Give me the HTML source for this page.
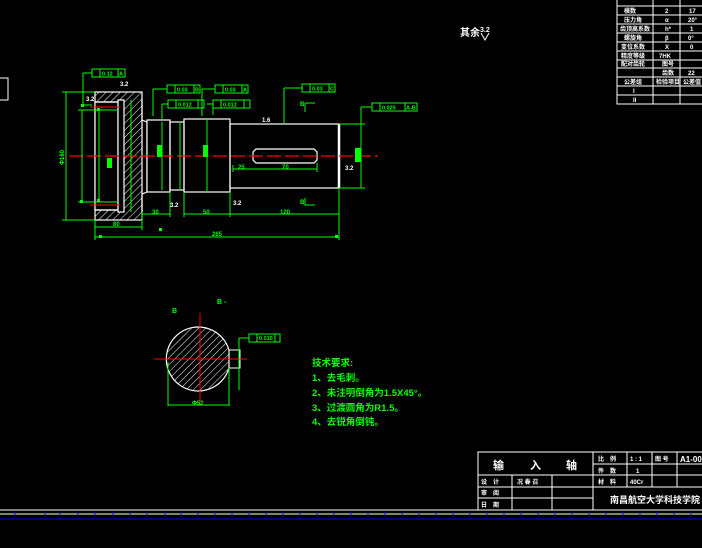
<!DOCTYPE html>
<html><head><meta charset="utf-8"><style>
html,body{margin:0;padding:0;background:#000;width:702px;height:548px;overflow:hidden}
svg{display:block}
text{font-family:"Liberation Sans","Noto Sans CJK SC",sans-serif;font-weight:bold}
</style></head><body>
<svg width="702" height="548" viewBox="0 0 702 548" xmlns="http://www.w3.org/2000/svg">
<defs>
<pattern id="h" width="5" height="5" patternUnits="userSpaceOnUse" patternTransform="rotate(45)">
<line x1="0" y1="0" x2="0" y2="5" stroke="#fff" stroke-width="1"/></pattern>
</defs>
<rect width="702" height="548" fill="#000"/>
<rect x="-1" y="78" width="9" height="22" fill="none" stroke="#fff"/>
<text x="460" y="36" fill="#fff" font-size="10">其余</text>
<text x="480" y="32" fill="#fff" font-size="7">3.2</text>
<path d="M481 33 L485 40 L489 33" stroke="#fff" fill="none"/>

<g stroke="#fff" fill="none" stroke-width="1.2">
<rect x="95" y="92" width="47" height="128" fill="url(#h)"/>
<rect x="95" y="102" width="23" height="108" fill="#000"/>
<rect x="118" y="100" width="6" height="112" fill="#000"/>
<line x1="95" y1="102" x2="118" y2="102"/><line x1="95" y1="210" x2="118" y2="210"/>
<path d="M142 100 L142 120 L147 122 L147 192 L142 194 L142 212"/>
<rect x="147" y="120" width="23" height="72" fill="#000"/>
<rect x="170" y="122" width="14" height="68"/>
<rect x="184" y="119" width="46" height="73"/>
<rect x="230" y="124" width="109" height="64"/>
<line x1="339" y1="124" x2="339" y2="188" stroke-width="2.5"/>
<path d="M256 149 L314 149 L317 152 L317 160 L314 163 L256 163 L253 160 L253 152 Z"/>
</g>
<line x1="69" y1="156" x2="378" y2="156" stroke="#f00" stroke-width="1.2" stroke-dasharray="14,4"/>
<line x1="90" y1="107" x2="120" y2="107" stroke="#f00"/>
<line x1="90" y1="205" x2="120" y2="205" stroke="#f00"/>

<g stroke="#0f0" fill="none" stroke-width="1">
<path d="M66 92 L66 220 M62 92 L95 92 M62 220 L95 220"/>
<path d="M82 110 L82 202 M78 110 L118 110 M78 202 L118 202"/>
<path d="M99 110 L99 202"/>
<path d="M131 100 L131 212"/>
<path d="M95 220 L95 240 M339 188 L339 240 M95 237 L339 237"/>
<path d="M95 227 L142 227 M142 212 L142 230"/>
<path d="M142 214 L170 214 M170 192 L170 217 M184 214 L230 214 M184 192 L184 217 M230 214 L339 214 M230 192 L230 217"/>
<path d="M233 169 L317 169 M233 165 L233 172 M317 163 L317 172"/>
<path d="M162 122 L162 190 M180 122 L180 190 M207 119 L207 192"/>
<path d="M361 124 L361 188 M339 124 L365 124 M339 188 L365 188"/>
<path d="M83 73 L83 105 L92 105 M83 73 L92 73"/>
<rect x="92" y="69" width="33" height="8"/><path d="M100 69 V77 M118 69 V77"/>
<path d="M153 89 L153 116 M153 89 L167 89"/>
<rect x="167" y="85" width="33" height="8"/><path d="M175 85 V93 M194 85 V93"/>
<path d="M162 104 L162 120 M162 104 L168 104"/>
<rect x="168" y="100" width="36" height="8"/><path d="M176 100 V108 M198 100 V108"/>
<path d="M202 89 L202 116 M202 89 L215 89"/>
<rect x="215" y="85" width="33" height="8"/><path d="M223 85 V93 M242 85 V93"/>
<path d="M207 104 L213 104 L213 115"/>
<rect x="213" y="100" width="37" height="8"/><path d="M221 100 V108 M244 100 V108"/>
<path d="M284 88 L284 124 M284 88 L302 88"/>
<rect x="302" y="84" width="33" height="8"/><path d="M310 84 V92 M329 84 V92"/>
<path d="M361 107 L361 124 M361 107 L372 107"/>
<rect x="372" y="103" width="45" height="8"/><path d="M380 103 V111 M405 103 V111"/>
<path d="M305 103 L305 112 M305 103 L315 103 M305 198 L305 205 L315 205"/>
</g>
<g fill="#0f0" font-size="5.5">
<text x="102" y="75.5">0.12</text><text x="177" y="91.5">0.03</text><text x="178" y="106.5">0.012</text>
<text x="225" y="91.5">0.03</text><text x="223" y="106.5">0.012</text><text x="312" y="90.5">0.03</text><text x="382" y="109.5">0.025</text>
<text x="119" y="75.5">A</text><text x="195" y="91.5">B</text><text x="243" y="91.5">A</text><text x="330" y="90.5">C</text><text x="406" y="109.5">A-B</text>
</g>
<g fill="#0f0">
<rect x="81" y="104" width="3" height="3"/><rect x="97" y="108" width="3" height="3"/><rect x="97" y="199" width="3" height="3"/>
<rect x="80" y="200" width="3" height="3"/><rect x="107" y="158" width="5" height="10"/><rect x="157" y="145" width="5" height="12"/><rect x="203" y="145" width="5" height="12"/>
<rect x="355" y="148" width="6" height="14"/><rect x="159" y="228" width="3" height="3"/><rect x="99" y="235" width="3" height="3"/><rect x="335" y="235" width="3" height="3"/>
</g>
<g fill="#0f0" font-size="6">
<text x="64" y="165" transform="rotate(-90 64 165)">Φ160</text>
<text x="152" y="214">30</text><text x="203" y="214">50</text><text x="280" y="214">120</text>
<text x="113" y="226">80</text><text x="212" y="236">265</text>
<text x="238" y="169">25</text><text x="282" y="169">70</text>
<text x="300" y="106">B</text><text x="300" y="204">B</text>
</g>
<g fill="#fff" font-size="6">
<text x="120" y="86">3.2</text><text x="262" y="122">1.6</text><text x="345" y="170">3.2</text>
<text x="170" y="207">3.2</text><text x="233" y="205">3.2</text><text x="86" y="101">3.2</text>
</g>

<text x="217" y="304" fill="#0f0" font-size="7">B -</text>
<text x="172" y="313" fill="#0f0" font-size="7">B</text>
<path d="M226 350 A32 32 0 1 0 226 368 Z" transform="translate(3,0)" fill="url(#h)" stroke="#fff" stroke-width="1.2"/>
<path d="M229 350 L240 350 L240 368 L229 368" stroke="#fff" fill="none"/>
<line x1="154" y1="359" x2="247" y2="359" stroke="#f00"/>
<line x1="200" y1="313" x2="200" y2="406" stroke="#f00"/>
<g stroke="#0f0" fill="none">
<path d="M168 362 L168 406 M229 368 L229 406 M168 405 L229 405"/>
<path d="M239 338 L239 390 M239 338 L249 338"/>
<rect x="249" y="334" width="31" height="8"/><path d="M257 334 V342 M275 334 V342"/>
</g>
<text x="259" y="340" fill="#0f0" font-size="5.5">0.015</text>
<text x="192" y="405" fill="#0f0" font-size="6">Φ52</text>
<g fill="#0f0" font-size="9.5">
<text x="312" y="366">技术要求:</text>
<text x="312" y="381">1、去毛刺。</text>
<text x="312" y="396">2、未注明倒角为1.5X45°。</text>
<text x="312" y="411">3、过渡圆角为R1.5。</text>
<text x="312" y="425">4、去锐角倒钝。</text>
</g>

<g stroke="#fff" fill="none">
<path d="M617 0 L617 104 L702 104 M653 0 L653 104 M680 0 L680 104"/>
<path d="M617 6 H702 M617 15 H702 M617 24 H702 M617 33 H702 M617 42 H702 M617 51 H702 M617 60 H702 M617 68 H702 M617 77 H702 M617 86 H702 M617 95 H702"/>
</g>
<g fill="#fff" font-size="6">
<text x="624" y="13">模数</text><text x="665" y="13">2</text><text x="689" y="13">17</text>
<text x="624" y="22">压力角</text><text x="665" y="22">α</text><text x="688" y="22">20°</text>
<text x="620" y="31">齿顶高系数</text><text x="665" y="31">h*</text><text x="690" y="31">1</text>
<text x="624" y="40">螺旋角</text><text x="665" y="40">β</text><text x="688" y="40">0°</text>
<text x="621" y="49">变位系数</text><text x="665" y="49">X</text><text x="690" y="49">0</text>
<text x="621" y="58">精度等级</text><text x="659" y="58">7HK</text>
<text x="621" y="66">配对齿轮</text><text x="662" y="66">图号</text>
<text x="662" y="75">齿数</text><text x="688" y="75">22</text>
<text x="624" y="84">公差组</text><text x="656" y="84">检验项目</text><text x="683" y="84">公差值</text>
<text x="633" y="93">I</text><text x="633" y="102">II</text>
</g>

<g stroke="#fff" fill="none">
<rect x="478" y="452" width="226" height="58"/>
<path d="M478 475 H593 M478 487 H593 M478 498 H593 M593 464 H702 M593 475 H702 M593 487 H702"/>
<path d="M512 475 V510 M552 475 V510 M593 452 V510 M627 452 V487 M652 452 V487 M677 452 V487"/>
<path d="M0 510 H702 M0 514 H702"/>
</g>
<line x1="0" y1="519" x2="702" y2="519" stroke="#00f"/>
<g stroke="#00f"><path d="M15 512 V516 M45 512 V516 M60 512 V516 M78 512 V516 M95 512 V516 M113 512 V516 M130 512 V516 M147 512 V516 M165 512 V516 M181 512 V516 M198 512 V516 M215 512 V516 M232 512 V516 M249 512 V516 M266 512 V516 M283 512 V516 M300 512 V516 M317 512 V516 M334 512 V516 M351 512 V516 M368 512 V516 M385 512 V516 M402 512 V516 M419 512 V516 M436 512 V516 M453 512 V516 M470 512 V516 M487 512 V516 M504 512 V516 M521 512 V516 M538 512 V516 M555 512 V516 M572 512 V516 M589 512 V516 M606 512 V516 M623 512 V516 M640 512 V516 M657 512 V516 M674 512 V516 M691 512 V516"/></g>
<g fill="#fff">
<text x="493" y="469" font-size="11">输</text><text x="530" y="469" font-size="11">入</text><text x="566" y="469" font-size="11">轴</text>
<g font-size="6"><text x="598" y="461">比　例</text><text x="630" y="461">1 : 1</text><text x="655" y="461">图 号</text><text x="680" y="462" font-size="8">A1-00</text>
<text x="598" y="473">件　数</text><text x="636" y="473">1</text>
<text x="598" y="484">材　料</text><text x="630" y="484">40Cr</text>
<text x="481" y="484">设　计</text><text x="517" y="484">况 春 召</text>
<text x="481" y="495">审　阅</text><text x="481" y="507">日　期</text></g>
<text x="610" y="503" font-size="9">南昌航空大学科技学院</text>
</g>
</svg>
</body></html>
